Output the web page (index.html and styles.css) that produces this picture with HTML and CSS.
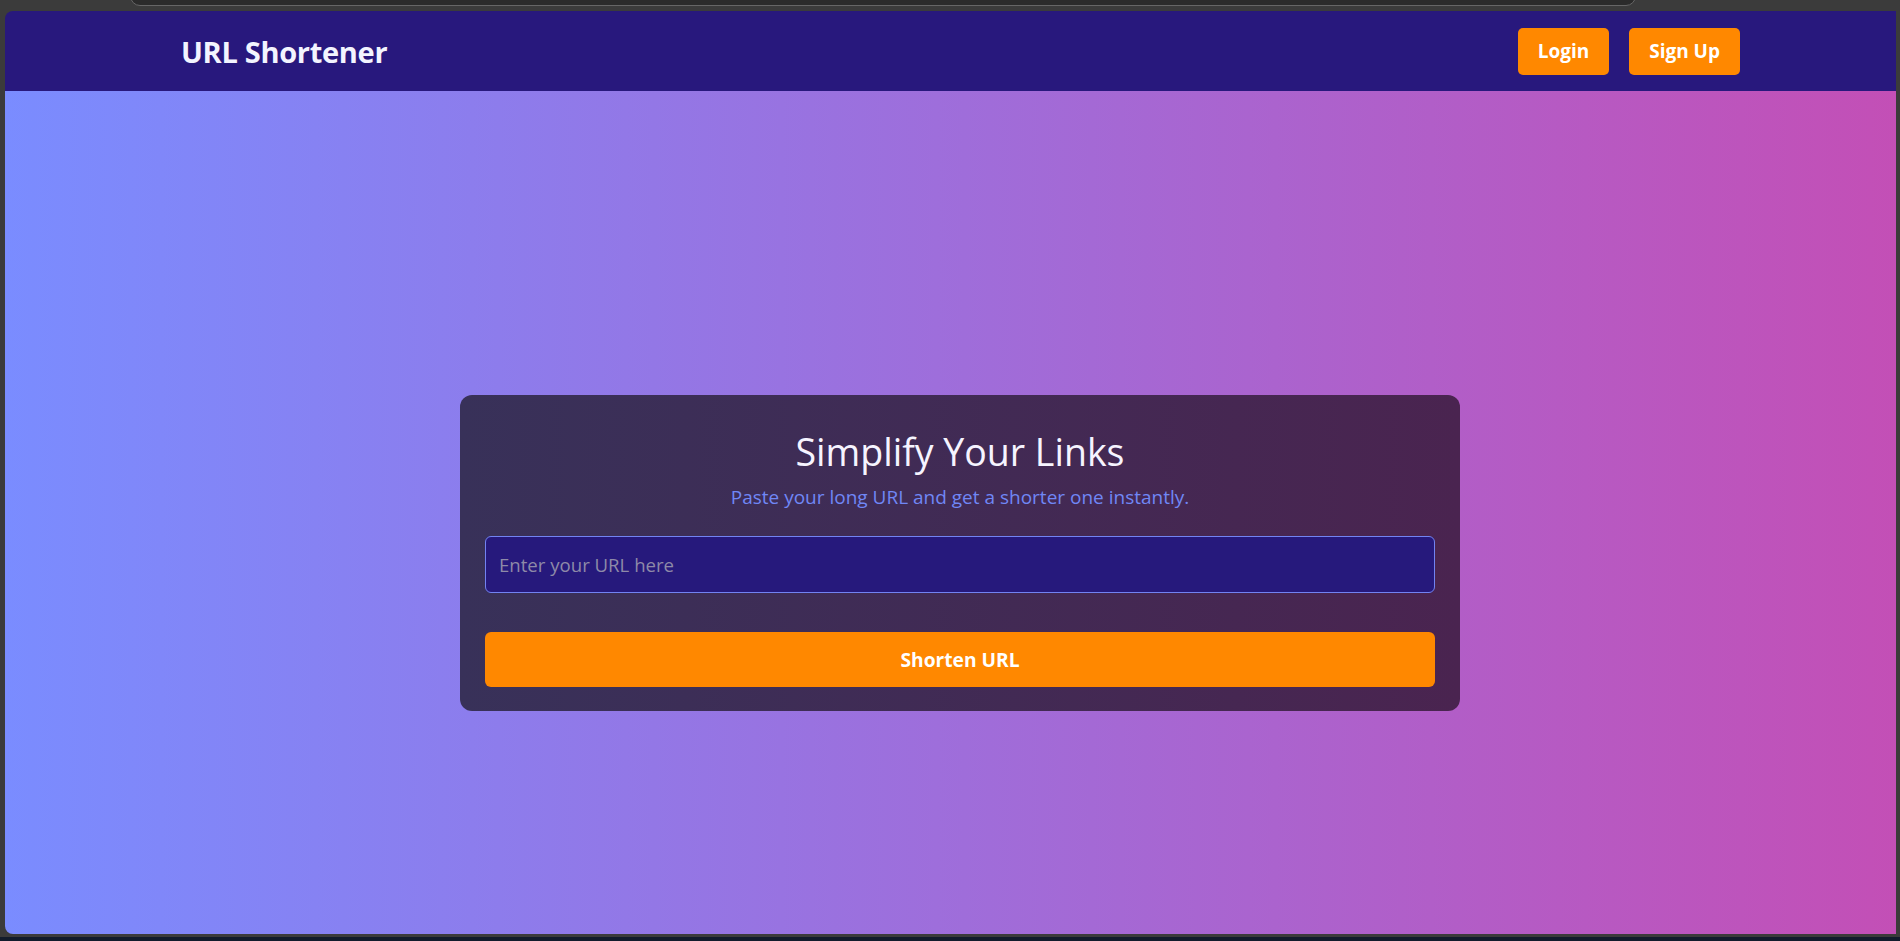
FILE: index.html
```html
<!DOCTYPE html>
<html lang="en">
<head>
<meta charset="utf-8">
<title>URL Shortener</title>
<link rel="stylesheet" href="styles.css">
</head>
<body>
  <div class="chrome-top">
    <div class="address-bar"></div>
  </div>
  <div class="window">
    <nav class="navbar">
      <div class="brand">URL Shortener</div>
      <div class="nav-actions">
        <button class="nav-btn">Login</button>
        <button class="nav-btn">Sign Up</button>
      </div>
    </nav>
    <main class="hero">
      <section class="card">
        <h1 class="card-title">Simplify Your Links</h1>
        <p class="card-subtitle">Paste your long URL and get a shorter one instantly.</p>
        <input class="url-input" type="text" placeholder="Enter your URL here">
        <button class="shorten-btn">Shorten URL</button>
      </section>
    </main>
  </div>
  <div class="chrome-bottom"></div>
</body>
</html>
```

FILE: styles.css
```css
* { box-sizing: border-box; }

html, body {
  margin: 0;
  height: 941px;
  overflow: hidden;
}

body {
  background: #3b3b3b;
  font-family: "Open Sans", "Noto Sans", sans-serif;
  display: flex;
  flex-direction: column;
}

.chrome-top {
  height: 11px;
  padding-left: 130px;
  overflow: hidden;
  display: flex;
  flex-shrink: 0;
}

.address-bar {
  width: 1506px;
  height: 26px;
  margin-top: -20px;
  border: 1px solid #666;
  border-radius: 10px;
  background: #2b2b2b;
}

.window {
  margin-left: 5px;
  width: 1891px;
  height: 923px;
  flex-shrink: 0;
  border-radius: 8px 0 0 8px;
  overflow: hidden;
  display: flex;
  flex-direction: column;
}

.chrome-bottom {
  height: 7px;
  flex-shrink: 0;
  border-top: 3px solid #3b3b3b;
  background: #121c2c;
}

.navbar {
  height: 80px;
  flex-shrink: 0;
  background: #28187d;
  display: flex;
  align-items: center;
  justify-content: space-between;
  padding: 0 156px 0 176px;
}

.brand {
  color: #f3f4ff;
  font-weight: 700;
  font-size: 29px;
  letter-spacing: -0.3px;
}

.nav-actions {
  display: flex;
  gap: 20px;
}

.nav-btn {
  height: 47px;
  padding: 0 20px;
  border: none;
  border-radius: 5px;
  background: #ff8800;
  color: #ffffff;
  font-family: inherit;
  font-weight: 700;
  font-size: 19px;
}

.hero {
  flex: 1;
  background: linear-gradient(to right, #7a8cff, #c34fb6);
  display: flex;
  justify-content: center;
  align-items: center;
  padding: 80px 0 0 19px;
}

.card {
  width: 1000px;
  padding: 25px 25px 24px;
  border-radius: 12px;
  background: linear-gradient(to right, #383159, #4a2450);
  display: flex;
  flex-direction: column;
  align-items: center;
}

.card-title {
  margin: 8px 0 0;
  font-size: 37.5px;
  line-height: 48px;
  font-weight: 400;
  color: #f6f4ff;
}

.card-subtitle {
  margin: 7px 0 0;
  font-size: 19px;
  line-height: 28px;
  color: #7087f6;
}

.url-input {
  margin-top: 25px;
  width: 100%;
  height: 57px;
  padding: 0 13px;
  border: 1px solid #7283f2;
  border-radius: 6px;
  background: #26197c;
  color: #ffffff;
  font-family: inherit;
  font-size: 18.6px;
  outline: none;
}

.url-input::placeholder {
  color: #8e8aa8;
}

.shorten-btn {
  margin-top: 39px;
  width: 100%;
  height: 55px;
  border: none;
  border-radius: 6px;
  background: #ff8800;
  color: #ffffff;
  font-family: inherit;
  font-weight: 700;
  font-size: 19.2px;
}
```
